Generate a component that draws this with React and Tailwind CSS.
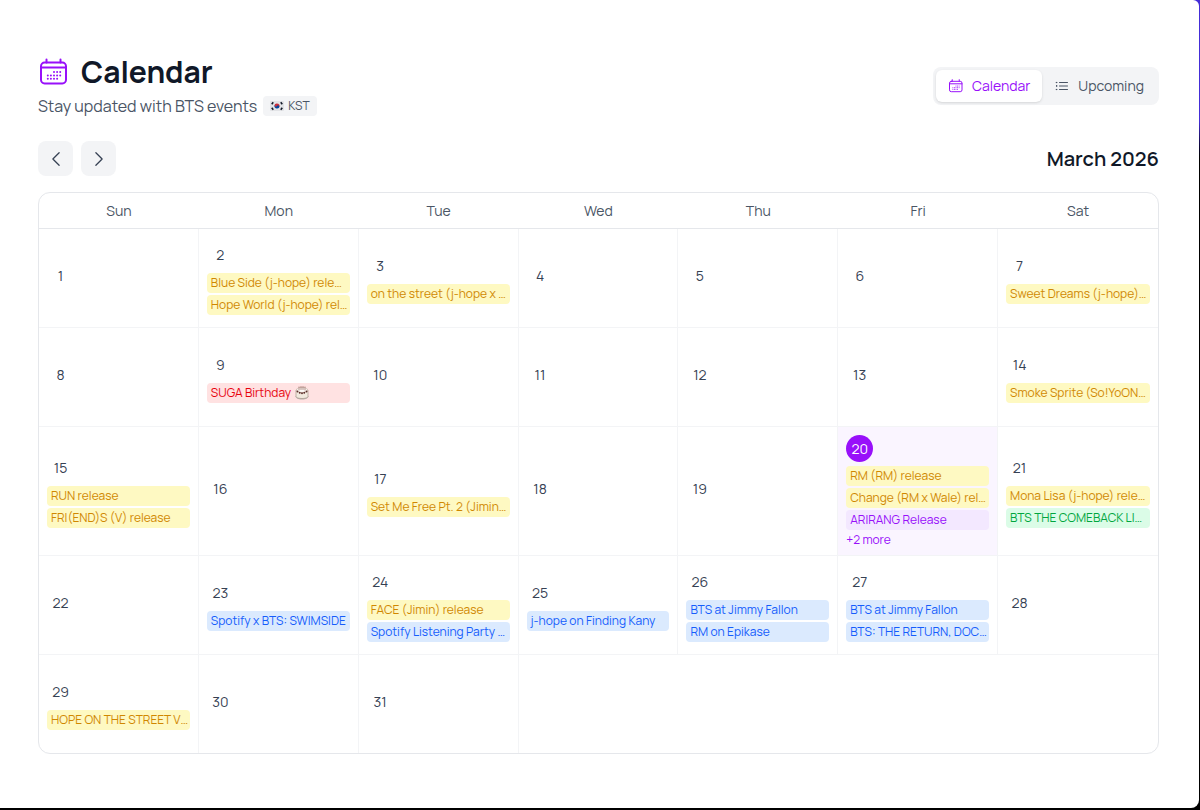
import { useState } from "react";
import {
  HiOutlineListBullet,
  HiOutlineChevronLeft,
  HiOutlineChevronRight,
} from "react-icons/hi2";

const weekDays = ["Sun", "Mon", "Tue", "Wed", "Thu", "Fri", "Sat"];

const typeStyles = {
  release: "bg-yellow-100 text-yellow-600",
  birthday: "bg-red-100 text-red-600",
  album: "bg-purple-100 text-purple-600",
  live: "bg-green-100 text-green-600",
  show: "bg-blue-100 text-blue-600",
};

const events = {
  2: [
    { type: "release", title: "Blue Side (j-hope) rele…" },
    { type: "release", title: "Hope World (j-hope) rel…" },
  ],
  3: [{ type: "release", title: "on the street (j-hope x …" }],
  7: [{ type: "release", title: "Sweet Dreams (j-hope)…" }],
  9: [{ type: "birthday", title: "SUGA Birthday" }],
  14: [{ type: "release", title: "Smoke Sprite (So!YoON…" }],
  15: [
    { type: "release", title: "RUN release" },
    { type: "release", title: "FRI(END)S (V) release" },
  ],
  17: [{ type: "release", title: "Set Me Free Pt. 2 (Jimin…" }],
  20: [
    { type: "release", title: "RM (RM) release" },
    { type: "release", title: "Change (RM x Wale) rel…" },
    { type: "album", title: "ARIRANG Release" },
  ],
  21: [
    { type: "release", title: "Mona Lisa (j-hope) rele…" },
    { type: "live", title: "BTS THE COMEBACK LI…" },
  ],
  23: [{ type: "show", title: "Spotify x BTS: SWIMSIDE" }],
  24: [
    { type: "release", title: "FACE (Jimin) release" },
    { type: "show", title: "Spotify Listening Party …" },
  ],
  25: [{ type: "show", title: "j-hope on Finding Kany" }],
  26: [
    { type: "show", title: "BTS at Jimmy Fallon" },
    { type: "show", title: "RM on Epikase" },
  ],
  27: [
    { type: "show", title: "BTS at Jimmy Fallon" },
    { type: "show", title: "BTS: THE RETURN, DOC…" },
  ],
  29: [{ type: "release", title: "HOPE ON THE STREET V…" }],
};

const hiddenCount = { 20: 2 };
const today = 20;
const weeks = [0, 1, 2, 3, 4].map((w) =>
  weekDays.map((_, d) => w * 7 + d + 1).filter((day) => day <= 31)
);

function CalendarIcon({ className }) {
  return (
    <svg
      viewBox="0 0 32 32"
      fill="none"
      stroke="currentColor"
      strokeWidth="2"
      strokeLinecap="round"
      className={className}
      aria-hidden="true"
    >
      <rect x="3" y="6.6" width="25" height="20.8" rx="3.6" />
      <path d="M3 11.600h25M8.500 3.400v3M22.500 3.400v3" />
      <g strokeWidth="2">
        <path d="M16 16.100h.01M19.100 16.100h.01M22.200 16.100h.01" />
        <path d="M9.800 19.400h.01M12.900 19.400h.01M16 19.400h.01M19.100 19.400h.01M22.200 19.400h.01" />
        <path d="M9.800 22.700h.01M12.900 22.700h.01M16 22.700h.01M19.100 22.700h.01" />
      </g>
    </svg>
  );
}

function KoreaFlag() {
  return (
    <svg viewBox="0 0 28 20" className="w-3.5 h-2.5" aria-hidden="true">
      <rect width="28" height="20" rx="2" fill="#e2e3e6" />
      <g transform="rotate(30 14 10)">
        <path d="M9 10a5 5 0 0 1 10 0z" fill="#cd2e3a" />
        <path d="M9 10a5 5 0 0 0 10 0z" fill="#0047a0" />
        <circle cx="11.5" cy="10" r="2.5" fill="#cd2e3a" />
        <circle cx="16.5" cy="10" r="2.5" fill="#0047a0" />
      </g>
      <g stroke="#111827" strokeWidth="3">
        <path d="M3.5 6.5 6.5 2.5" />
        <path d="M21.5 2.5 24.5 6.5" />
        <path d="M3.5 13.5 6.5 17.5" />
        <path d="M21.5 17.5 24.5 13.5" />
      </g>
    </svg>
  );
}

function CakeIcon() {
  return (
    <svg viewBox="0 0 28 28" className="w-3.5 h-3.5 shrink-0" aria-hidden="true">
      <path d="M1 20c0 4 5 7 13 7s13-3 13-7z" fill="#b5afab" />
      <path d="M2 8v13c0 2 5 4 12 4s12-2 12-4V8z" fill="#f1e9de" />
      <path
        d="M2 8v13c0 2 5 4 12 4s12-2 12-4V8"
        fill="none"
        stroke="#a8998d"
        strokeWidth="1.4"
      />
      <ellipse cx="14" cy="8" rx="12" ry="6" fill="#cdbcb0" />
      <ellipse cx="14" cy="8" rx="10" ry="4.5" fill="#fdfaf6" />
      <path
        d="M8 2v6M12 1v6M16 1v6M20 2v6"
        stroke="#9c6f68"
        strokeWidth="1.6"
        strokeLinecap="round"
      />
      <g fill="#5b2f2b">
        <circle cx="5" cy="11" r="1.9" />
        <circle cx="9.500" cy="13.500" r="1.9" />
        <circle cx="14" cy="14.500" r="1.9" />
        <circle cx="18.500" cy="13.500" r="1.9" />
        <circle cx="23" cy="11" r="1.9" />
      </g>
    </svg>
  );
}

function EventChip({ event }) {
  return (
    <div
      className={`flex items-center gap-1 h-5 px-1 rounded text-xs whitespace-nowrap overflow-hidden ${typeStyles[event.type]}`}
    >
      <span>{event.title}</span>
      {event.type === "birthday" && <CakeIcon />}
    </div>
  );
}

function DayCell({ day }) {
  const isToday = day === today;

  return (
    <td
      className={`p-2 align-middle border-gray-100 border-b border-r nth-7:border-r-0 ${isToday ? "bg-purple-50" : ""}`}
    >
      <div
        className={`flex items-center justify-center w-[27px] h-[27px] mb-1 rounded-full text-sm ${
          isToday ? "bg-purple-600 text-white" : "text-gray-700"
        }`}
      >
        {day}
      </div>
      {events[day] && (
        <div className="space-y-0.5">
          {events[day].map((event) => (
            <EventChip key={event.title} event={event} />
          ))}
          {hiddenCount[day] && (
            <button className="block text-xs leading-[15px] text-purple-600">
              +{hiddenCount[day]} more
            </button>
          )}
        </div>
      )}
    </td>
  );
}

export default function App() {
  const [view, setView] = useState("calendar");

  const tabClass = (active) =>
    `flex items-center gap-2 h-8 px-3 rounded-md text-sm ${
      active ? "bg-white text-purple-600 shadow-sm" : "text-gray-600"
    }`;

  return (
    <div className="min-h-screen flex flex-col pr-px pb-0.5 bg-linear-to-b from-indigo-700 from-15% to-black to-20% font-['Manrope','Inter',sans-serif]">
      <main className="flex-1 bg-white rounded-tr-md rounded-br-lg pl-[38px] pr-10 pt-[54px] pb-12">
        {/* Header */}
        <header className="flex items-center justify-between">
          <div>
            <h1 className="flex items-center gap-[11px] text-3xl font-bold text-gray-900">
              <CalendarIcon className="w-8 h-8 text-purple-600" />
              Calendar
            </h1>
            <div className="flex items-center gap-1.5 mt-1 text-gray-600">
              <p>Stay updated with BTS events</p>
              <span className="flex items-center gap-1 h-5 px-[7px] rounded bg-gray-100 text-xs">
                <KoreaFlag />
                KST
              </span>
            </div>
          </div>

          <div className="flex p-[3px] rounded-lg bg-gray-100">
            <button
              onClick={() => setView("calendar")}
              className={tabClass(view === "calendar")}
            >
              <CalendarIcon className="w-4 h-4" />
              Calendar
            </button>
            <button
              onClick={() => setView("upcoming")}
              className={tabClass(view === "upcoming")}
            >
              <HiOutlineListBullet className="w-4 h-4" />
              Upcoming
            </button>
          </div>
        </header>

        {/* Month navigation */}
        <div className="flex items-center justify-between mt-[23px]">
          <div className="flex gap-2">
            <button
              aria-label="Previous month"
              className="flex items-center justify-center w-[35px] h-[35px] rounded-lg bg-gray-100 text-gray-700"
            >
              <HiOutlineChevronLeft className="w-5 h-5" />
            </button>
            <button
              aria-label="Next month"
              className="flex items-center justify-center w-[35px] h-[35px] rounded-lg bg-gray-100 text-gray-700"
            >
              <HiOutlineChevronRight className="w-5 h-5" />
            </button>
          </div>
          <h2 className="text-xl font-semibold text-gray-900">March 2026</h2>
        </div>

        {/* Month grid */}
        <div className="mt-4 border border-gray-200 rounded-xl overflow-hidden">
          <table className="w-full table-fixed border-separate border-spacing-0">
            <thead>
              <tr className="h-9">
                {weekDays.map((name) => (
                  <th
                    key={name}
                    className="border-b border-gray-200 text-sm font-normal text-gray-600"
                  >
                    {name}
                  </th>
                ))}
              </tr>
            </thead>
            <tbody>
              {weeks.map((week) => (
                <tr
                  key={week[0]}
                  className="h-[99px] last:h-[98px] last:*:border-b-0"
                >
                  {week.map((day) => (
                    <DayCell key={day} day={day} />
                  ))}
                </tr>
              ))}
            </tbody>
          </table>
        </div>
      </main>
    </div>
  );
}
